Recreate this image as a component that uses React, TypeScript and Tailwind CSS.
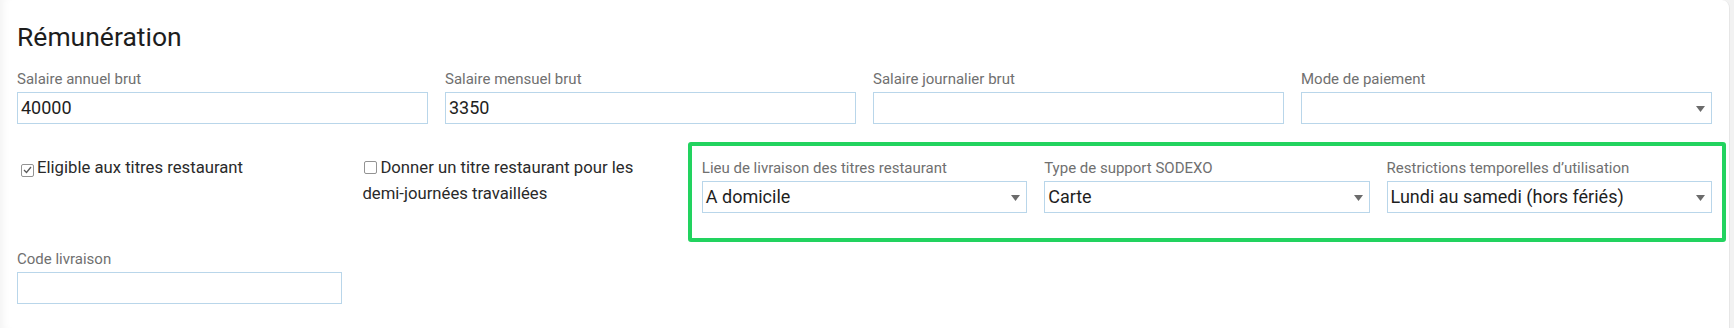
import type { ReactNode } from 'react'

const font = { fontFamily: 'Roboto, "Liberation Sans", sans-serif' }

function Label({ children }: { children: ReactNode }) {
  return <div className="text-[15px] leading-[20px] text-[#707070] mb-[3px] whitespace-nowrap">{children}</div>
}

function Box({ value, select }: { value?: string; select?: boolean }) {
  return (
    <div className="relative h-[32px] border border-[#b9d6ea] bg-white flex items-center pl-[3px] pr-[24px]">
      <span className="text-[18px] leading-[22px] text-[#1e1e1e] whitespace-nowrap">{value}</span>
      {select && (
        <svg className="absolute right-[6px] top-[13px]" width="9" height="6" viewBox="0 0 9 6">
          <path d="M0 0 L9 0 L4.5 6 Z" fill="#6b6b6b" />
        </svg>
      )}
    </div>
  )
}

function Field({ label, value, select }: { label: string; value?: string; select?: boolean }) {
  return (
    <div>
      <Label>{label}</Label>
      <Box value={value} select={select} />
    </div>
  )
}

function Check({ checked }: { checked?: boolean }) {
  return (
    <span className="inline-flex items-center justify-center w-[13px] h-[13px] border border-[#939393] rounded-[2px] bg-white mr-[3px] align-[-1px]">
      {checked && (
        <svg width="9" height="8" viewBox="0 0 9 8">
          <path d="M1 4 L3.5 6.5 L8 1" fill="none" stroke="#5a5a5a" strokeWidth="1.3" />
        </svg>
      )}
    </span>
  )
}

export default function App() {
  return (
    <div className="w-[1734px] h-[328px] bg-[#f2f2f2] overflow-hidden" style={font}>
      <div className="w-[1730px] h-[328px] bg-white rounded-tr-[8px] px-[17px] shadow-[inset_9px_0_8px_-6px_rgba(0,0,0,0.05)] border-r border-[#e6e6e6]">
        <h1 className="pt-[22px] text-[26.5px] leading-[30px] text-[#1d1d1d] font-normal">Rémunération</h1>

        {/* ligne salaires */}
        <div className="grid grid-cols-4 gap-x-[17px] mt-[17px]">
          <Field label="Salaire annuel brut" value="40000" />
          <Field label="Salaire mensuel brut" value="3350" />
          <Field label="Salaire journalier brut" />
          <Field label="Mode de paiement" select />
        </div>

        {/* titres restaurant */}
        <div className="grid grid-cols-5 gap-x-[17px] mt-[18px]">
          <div className="pt-[13px] pl-[4px] text-[16.7px] leading-[26px] text-[#2a2a2a]">
            <Check checked />Eligible aux titres restaurant
          </div>
          <div className="pt-[13px] pl-[3px] text-[16.7px] leading-[26px] text-[#2a2a2a]">
            <span className="ml-[2px]"><Check /></span>Donner un titre restaurant pour les{' '}
            <span className="whitespace-nowrap">demi-journées</span> travaillées
          </div>
          <div className="col-span-3 -mx-[14px] border-[4px] border-[#22d35f] rounded-[3px] px-[10px] pt-[12px] pb-[25px]">
            <div className="grid grid-cols-3 gap-x-[17px]">
              <Field label="Lieu de livraison des titres restaurant" value="A domicile" select />
              <Field label="Type de support SODEXO" value="Carte" select />
              <Field label="Restrictions temporelles d’utilisation" value="Lundi au samedi (hors fériés)" select />
            </div>
          </div>
        </div>

        <div className="grid grid-cols-5 gap-x-[17px] mt-[7px]">
          <Field label="Code livraison" />
        </div>
      </div>
    </div>
  )
}
